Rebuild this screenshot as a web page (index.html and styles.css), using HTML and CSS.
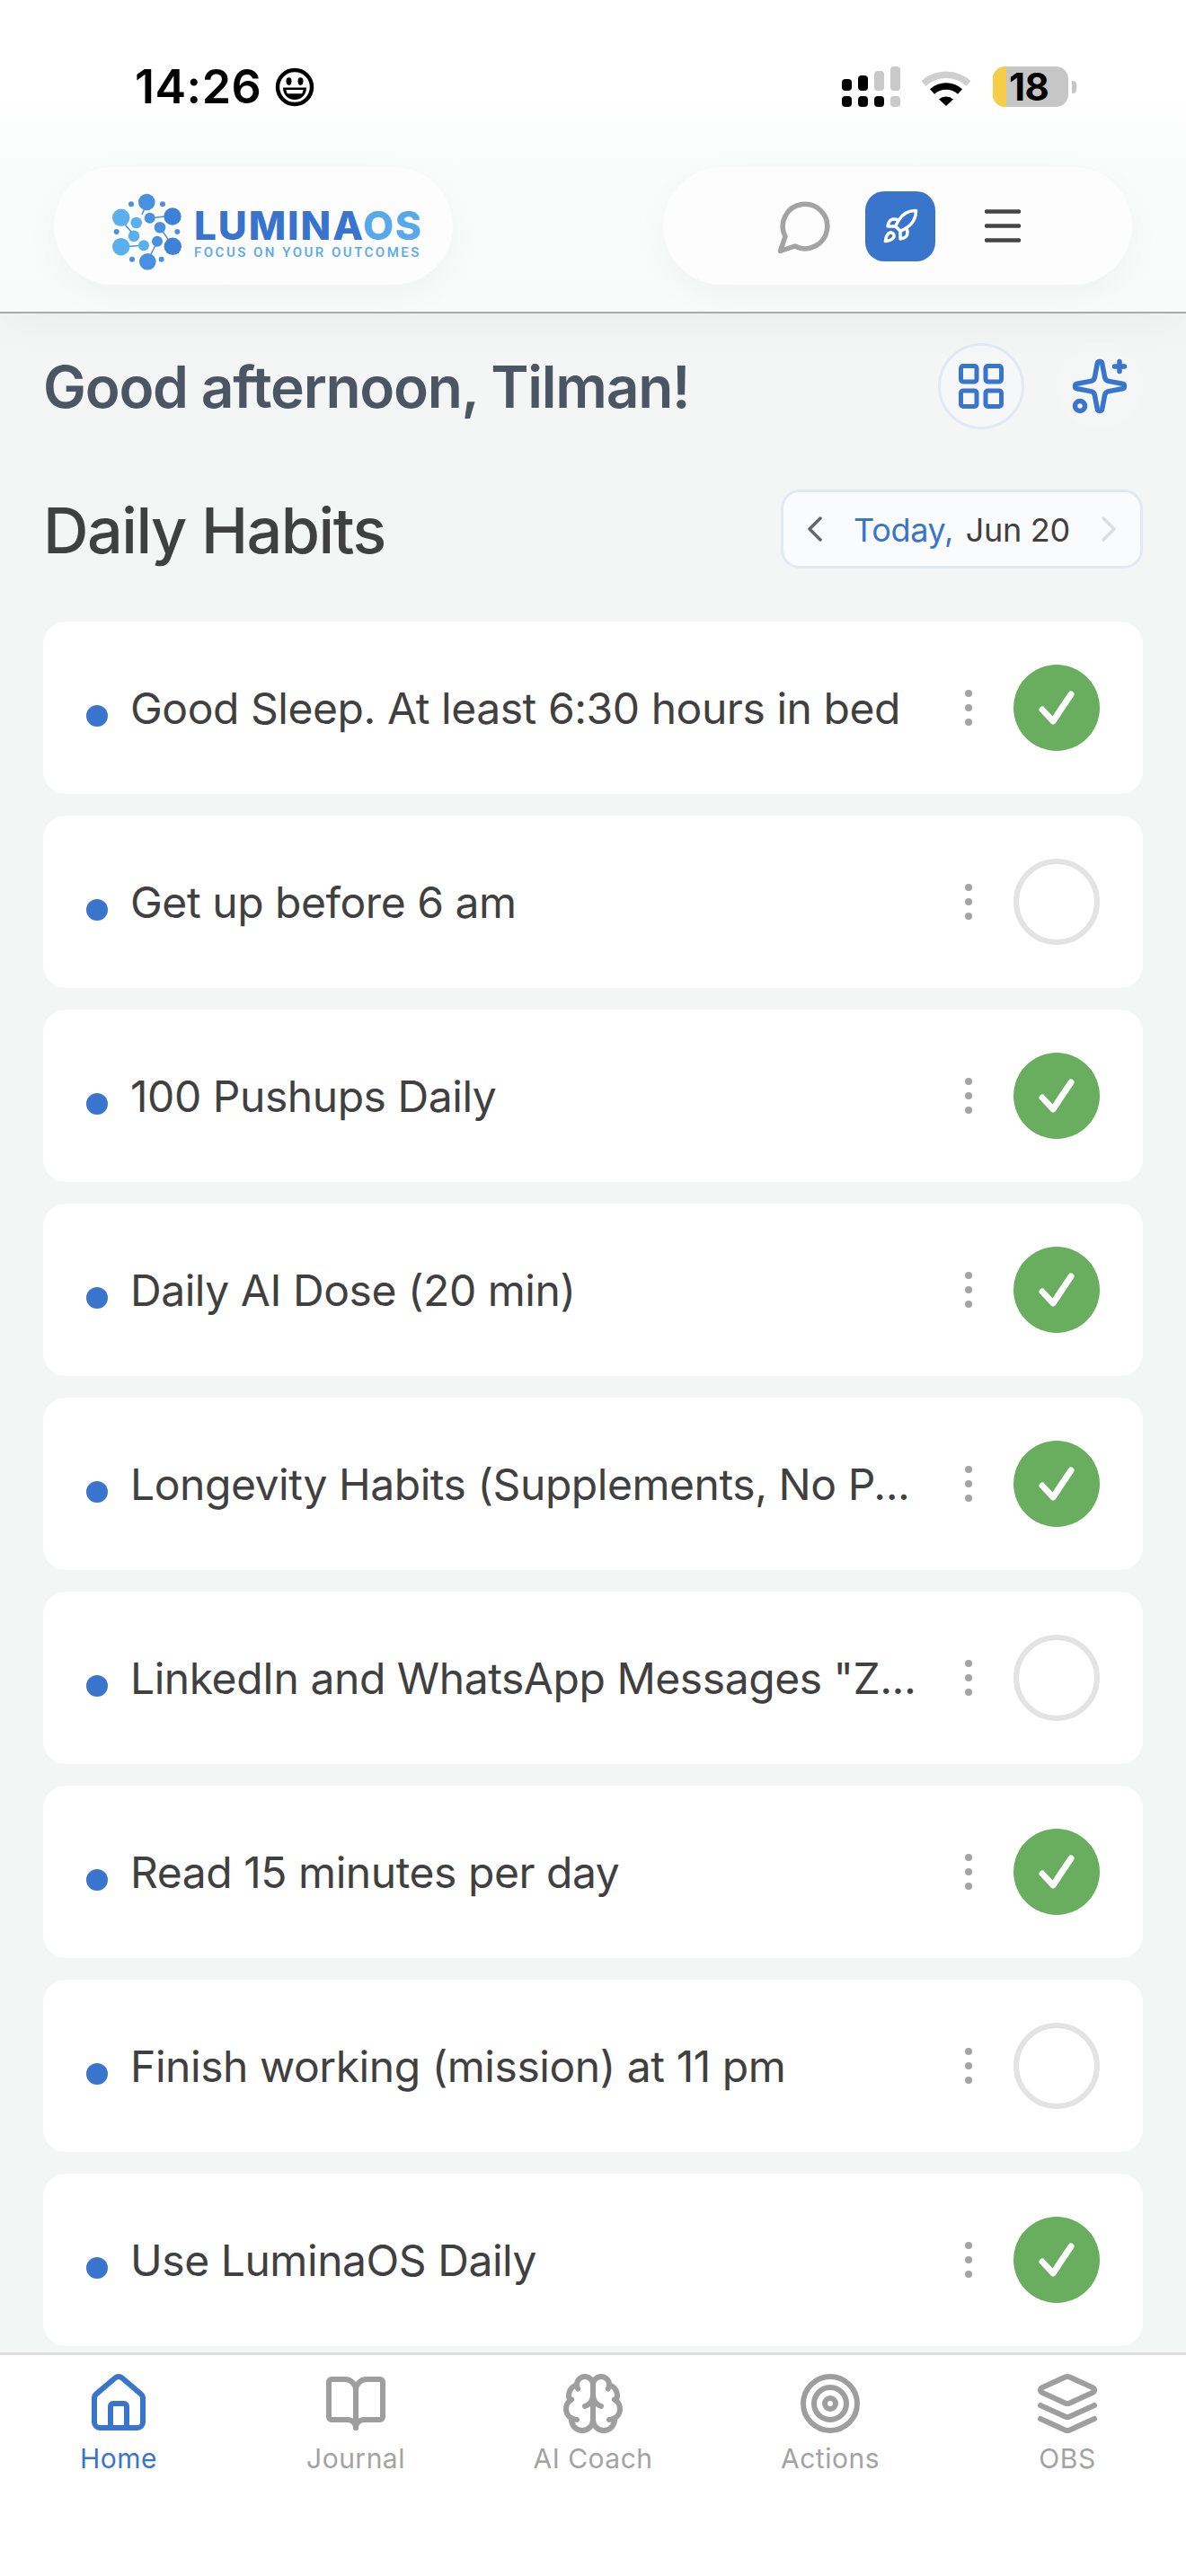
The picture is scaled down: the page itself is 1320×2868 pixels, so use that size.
FILE: index.html
```html
<!DOCTYPE html>
<html lang="en">
<head>
<meta charset="utf-8">
<title>LuminaOS</title>
<link rel="stylesheet" href="styles.css">
</head>
<body>
<div class="app">
  <header class="top">
    <div class="status">
      <div class="clock">
        <span class="time">14:26</span>
        <svg class="emoji" viewBox="0 0 44 44"><circle cx="22" cy="22" r="19" fill="#fff" stroke="#000" stroke-width="4.4"/><ellipse cx="15.5" cy="15.5" rx="3" ry="4.2"/><ellipse cx="28.5" cy="15.5" rx="3" ry="4.2"/><path d="M9 22.5h26c0 8-5.5 13.5-13 13.5S9 30.500 9 22.500z"/><path d="M12.500 25h19c-.3 2-.8 3.200-1.500 4.200H14c-.7-1-1.200-2.200-1.500-4.200z" fill="#fff"/></svg>
      </div>
      <div class="indicators">
        <svg class="signal" viewBox="0 0 65 45"><g><rect x="0" y="14" width="11" height="13" rx="4"/><rect x="18" y="10" width="11" height="17" rx="4"/><rect x="0" y="33" width="11" height="12" rx="4"/><rect x="18" y="33" width="11" height="12" rx="4"/><rect x="36" y="33" width="11" height="12" rx="4"/></g><g fill="#c9c9c9"><rect x="36" y="5" width="11" height="22" rx="4"/><rect x="54" y="0" width="11" height="27" rx="4"/><rect x="54" y="33" width="11" height="12" rx="4"/></g></svg>
        <svg class="wifi" viewBox="0 0 58 43"><path d="M4 18a37 37 0 0 1 50 0" fill="none" stroke="#cfcfcf" stroke-width="7.500"/><path d="M13.500 27a23 23 0 0 1 31 0" fill="none" stroke="#000" stroke-width="7.500"/><path d="M21 35.500a12 12 0 0 1 16 0L29 43z"/></svg>
        <div class="battery">
          <div class="battery-body"><span class="battery-fill"></span><span class="battery-num">18</span></div>
          <span class="battery-tip"></span>
        </div>
      </div>
    </div>
    <div class="bar">
      <div class="pill logo-pill">
        <svg class="logo-mark" viewBox="0 0 80 90">
          <g stroke="#4a90e2" stroke-width="1.500" fill="none"><path d="M41 13l-5 12M44 29l26-3M12 30l17 20M12 61l28-2M56 39l14 21M53 55L42 77"/></g>
          <g fill="#4a90e2"><circle cx="41.300" cy="11" r="9.300"/><circle cx="24" cy="13.300" r="3"/><circle cx="59" cy="13.300" r="3"/><circle cx="44.700" cy="28.700" r="6"/><circle cx="56" cy="39.300" r="6.300"/><circle cx="7.700" cy="44" r="3"/><circle cx="75.300" cy="44" r="3"/><circle cx="53" cy="54.700" r="6"/><circle cx="25" cy="74.700" r="3"/><circle cx="42.300" cy="77.300" r="9.300"/><circle cx="57.700" cy="74.700" r="3"/></g>
          <g fill="#5aafef"><circle cx="12.700" cy="28.300" r="9.700"/><circle cx="29.700" cy="34" r="6.300"/><circle cx="27" cy="48.700" r="6.300"/><circle cx="12.700" cy="60.700" r="9.700"/><circle cx="38" cy="59.300" r="6"/></g>
          <g fill="#3f80d8"><circle cx="70" cy="27" r="9.700"/><circle cx="70.300" cy="60.300" r="9.700"/></g>
        </svg>
        <div class="logo-text">
          <div class="logo-name">LUMINA<span class="logo-os">OS</span></div>
          <div class="logo-tag">FOCUS ON YOUR OUTCOMES</div>
        </div>
      </div>
      <div class="pill tools-pill">
        <svg class="icon-chat" viewBox="0 0 24 24"><path d="M7.900 20A9 9 0 1 0 4 16.100L2 22Z"/></svg>
        <div class="rocket-tile">
          <svg class="icon-rocket" viewBox="0 0 24 24"><path d="M4.500 16.500c-1.500 1.260-2 5-2 5s3.740-.5 5-2c.71-.84.7-2.130-.09-2.910a2.180 2.180 0 0 0-2.910-.09z"/><path d="m12 15-3-3a22 22 0 0 1 2-3.950A12.880 12.880 0 0 1 22 2c0 2.720-.78 7.500-6 11a22.350 22.350 0 0 1-4 2z"/><path d="M9 12H4s.55-3.030 2-4c1.620-1.080 5 0 5 0"/><path d="M12 15v5s3.030-.55 4-2c1.080-1.620 0-5 0-5"/></svg>
        </div>
        <svg class="icon-menu" viewBox="0 0 40 37"><path d="M2 2.500h36M2 18.500h36M2 34.500h36"/></svg>
      </div>
    </div>
  </header>

  <main class="main">
    <div class="greeting-row">
      <h1 class="greeting">Good afternoon, Tilman!</h1>
      <div class="round-buttons">
        <div class="round-btn round-btn-outlined">
          <svg class="icon-grid" viewBox="0 0 24 24"><rect width="7" height="7" x="3" y="3" rx="1"/><rect width="7" height="7" x="14" y="3" rx="1"/><rect width="7" height="7" x="14" y="14" rx="1"/><rect width="7" height="7" x="3" y="14" rx="1"/></svg>
        </div>
        <div class="round-btn">
          <svg class="icon-sparkle" viewBox="0 0 24 24"><path d="M11.017 2.814a1 1 0 0 1 1.966 0l1.051 5.558a2 2 0 0 0 1.594 1.594l5.558 1.051a1 1 0 0 1 0 1.966l-5.558 1.051a2 2 0 0 0-1.594 1.594l-1.051 5.558a1 1 0 0 1-1.966 0l-1.051-5.558a2 2 0 0 0-1.594-1.594l-5.558-1.051a1 1 0 0 1 0-1.966l5.558-1.051a2 2 0 0 0 1.594-1.594z"/><path d="M20 2v4"/><path d="M22 4h-4"/><circle cx="4" cy="20" r="2"/></svg>
        </div>
      </div>
    </div>

    <div class="habits-head">
      <h2 class="habits-title">Daily Habits</h2>
      <div class="date-picker">
        <svg class="chev chev-on" viewBox="0 0 16 28"><path d="M14 2L2 14l12 12"/></svg>
        <span class="date-text"><span class="date-today">Today,</span> Jun 20</span>
        <svg class="chev chev-off" viewBox="0 0 16 28"><path d="M2 2l12 12L2 26"/></svg>
      </div>
    </div>

    <ul class="habits">
      <li class="habit"><span class="bullet"></span><span class="habit-name">Good Sleep. At least 6:30 hours in bed</span><span class="more"><i></i><i></i><i></i></span><span class="check done"><svg viewBox="0 0 96 96"><path d="M32 50l12 13 20-30"/></svg></span></li>
      <li class="habit"><span class="bullet"></span><span class="habit-name">Get up before 6 am</span><span class="more"><i></i><i></i><i></i></span><span class="check"></span></li>
      <li class="habit"><span class="bullet"></span><span class="habit-name">100 Pushups Daily</span><span class="more"><i></i><i></i><i></i></span><span class="check done"><svg viewBox="0 0 96 96"><path d="M32 50l12 13 20-30"/></svg></span></li>
      <li class="habit"><span class="bullet"></span><span class="habit-name">Daily AI Dose (20 min)</span><span class="more"><i></i><i></i><i></i></span><span class="check done"><svg viewBox="0 0 96 96"><path d="M32 50l12 13 20-30"/></svg></span></li>
      <li class="habit"><span class="bullet"></span><span class="habit-name">Longevity Habits (Supplements, No P...</span><span class="more"><i></i><i></i><i></i></span><span class="check done"><svg viewBox="0 0 96 96"><path d="M32 50l12 13 20-30"/></svg></span></li>
      <li class="habit"><span class="bullet"></span><span class="habit-name">LinkedIn and WhatsApp Messages "Z...</span><span class="more"><i></i><i></i><i></i></span><span class="check"></span></li>
      <li class="habit"><span class="bullet"></span><span class="habit-name">Read 15 minutes per day</span><span class="more"><i></i><i></i><i></i></span><span class="check done"><svg viewBox="0 0 96 96"><path d="M32 50l12 13 20-30"/></svg></span></li>
      <li class="habit"><span class="bullet"></span><span class="habit-name">Finish working (mission) at 11 pm</span><span class="more"><i></i><i></i><i></i></span><span class="check"></span></li>
      <li class="habit"><span class="bullet"></span><span class="habit-name">Use LuminaOS Daily</span><span class="more"><i></i><i></i><i></i></span><span class="check done"><svg viewBox="0 0 96 96"><path d="M32 50l12 13 20-30"/></svg></span></li>
    </ul>
  </main>

  <nav class="tabs">
    <div class="tab tab-active">
      <svg viewBox="0 0 24 24"><path d="M15 21v-8a1 1 0 0 0-1-1h-4a1 1 0 0 0-1 1v8"/><path d="M3 10a2 2 0 0 1 .709-1.528l7-5.999a2 2 0 0 1 2.582 0l7 5.999A2 2 0 0 1 21 10v9a2 2 0 0 1-2 2H5a2 2 0 0 1-2-2z"/></svg>
      <span>Home</span>
    </div>
    <div class="tab">
      <svg viewBox="0 0 24 24"><path d="M12 7v14"/><path d="M3 18a1 1 0 0 1-1-1V4a1 1 0 0 1 1-1h5a4 4 0 0 1 4 4 4 4 0 0 1 4-4h5a1 1 0 0 1 1 1v13a1 1 0 0 1-1 1h-6a3 3 0 0 0-3 3 3 3 0 0 0-3-3z"/></svg>
      <span>Journal</span>
    </div>
    <div class="tab">
      <svg viewBox="0 0 24 24"><path d="M12 5a3 3 0 1 0-5.997.125 4 4 0 0 0-2.526 5.770 4 4 0 0 0 .556 6.588A4 4 0 1 0 12 18Z"/><path d="M12 5a3 3 0 1 1 5.997.125 4 4 0 0 1 2.526 5.770 4 4 0 0 1-.556 6.588A4 4 0 1 1 12 18Z"/><path d="M15 13a4.500 4.500 0 0 1-3-4 4.500 4.500 0 0 1-3 4"/><path d="M17.599 6.500a3 3 0 0 0 .399-1.375"/><path d="M6.003 5.125A3 3 0 0 0 6.401 6.500"/><path d="M3.477 10.896a4 4 0 0 1 .585-.396"/><path d="M19.938 10.500a4 4 0 0 1 .585.396"/><path d="M6 18a4 4 0 0 1-1.967-.516"/><path d="M19.967 17.484A4 4 0 0 1 18 18"/></svg>
      <span>AI Coach</span>
    </div>
    <div class="tab">
      <svg viewBox="0 0 24 24"><circle cx="12" cy="12" r="10"/><circle cx="12" cy="12" r="6"/><circle cx="12" cy="12" r="2"/></svg>
      <span>Actions</span>
    </div>
    <div class="tab">
      <svg viewBox="0 0 24 24"><path d="m12.830 2.180a2 2 0 0 0-1.660 0L2.600 6.080a1 1 0 0 0 0 1.830l8.580 3.910a2 2 0 0 0 1.660 0l8.580-3.900a1 1 0 0 0 0-1.830Z"/><path d="m22 17.650-9.170 4.160a2 2 0 0 1-1.660 0L2 17.650"/><path d="m22 12.650-9.170 4.160a2 2 0 0 1-1.660 0L2 12.650"/></svg>
      <span>OBS</span>
    </div>
  </nav>
</div>
</body>
</html>
```

FILE: styles.css
```css
* { box-sizing: border-box; }
html, body { margin: 0; padding: 0; }
body { font-family: Inter, "Liberation Sans", sans-serif; background: #fff; }
h1, h2, ul { margin: 0; padding: 0; }
ul { list-style: none; }

.app {
  width: 1320px;
  height: 2868px;
  display: flex;
  flex-direction: column;
  overflow: hidden;
  background: #f4f6f6;
}

/* top */
.top {
  height: 349px;
  flex: none;
  background: linear-gradient(#fff 0, #fff 100px, #fafbfb 190px, #f9fafa 100%);
  border-bottom: 2px solid #ababab;
  box-shadow: 0 10px 50px rgba(0, 0, 0, .04);
  position: relative;
  z-index: 1;
}
.status {
  height: 186px;
  padding: 74px 122px 0 150px;
  display: flex;
  justify-content: space-between;
  align-items: flex-start;
}
.clock { display: flex; align-items: center; gap: 15px; height: 45px; }
.time { font-size: 52px; font-weight: 600; line-height: 45px; color: #000; letter-spacing: .5px; }
.emoji { width: 44px; height: 44px; display: block; }
.indicators { display: flex; align-items: flex-start; }
.signal { width: 65px; height: 45px; display: block; margin-right: 22px; }
.wifi { width: 58px; height: 43px; display: block; margin: 1px 23px 0 0; }
.battery { display: flex; align-items: center; gap: 4px; height: 45px; }
.battery-body {
  width: 84px;
  height: 45px;
  border-radius: 14px;
  background: #c6c6c6;
  display: flex;
  align-items: center;
}
.battery-fill { width: 15px; height: 100%; background: #f6cd46; flex: none; border-radius: 14px 0 0 14px; }
.battery-num { font-size: 42px; font-weight: 700; line-height: 45px; color: #000; margin-left: 3px; letter-spacing: -.5px; }
.battery-tip { width: 5px; height: 14px; background: #c6c6c6; border-radius: 0 4px 4px 0; }

.bar { display: flex; justify-content: space-between; padding: 0 60px; }
.pill {
  height: 131px;
  border-radius: 66px;
  background: #fdfdfd;
  box-shadow: 0 12px 40px rgba(0, 0, 0, .035);
  display: flex;
  align-items: center;
}
.logo-pill { width: 444px; padding-left: 62px; }
.logo-mark { width: 80px; height: 90px; flex: none; display: block; margin-top: 15px; }
.logo-text { margin: 17px 0 0 14px; width: 252px; }
.logo-name {
  font-size: 44px;
  font-weight: 800;
  line-height: 38px;
  letter-spacing: 1.9px;
  color: #3873cc;
  white-space: nowrap;
  height: 38px;
}
.logo-os { color: #58a9ea; }
.logo-tag {
  font-family: Roboto, Inter, sans-serif;
  font-size: 15px;
  font-weight: 500;
  line-height: 16px;
  margin-top: 3px;
  letter-spacing: 2.5px;
  color: #58a9ea;
  white-space: nowrap;
}
.tools-pill { width: 522px; padding-left: 125px; }
.icon-chat { width: 66px; height: 66px; fill: none; stroke: #a3a3a3; stroke-width: 2; stroke-linecap: round; stroke-linejoin: round; display: block; }
.rocket-tile {
  width: 78px;
  height: 78px;
  margin-left: 34px;
  border-radius: 21px;
  background: #3a75cc;
  display: flex;
  align-items: center;
  justify-content: center;
}
.icon-rocket { width: 42px; height: 42px; fill: none; stroke: #fff; stroke-width: 2; stroke-linecap: round; stroke-linejoin: round; display: block; }
.icon-menu { width: 40px; height: 37px; margin-left: 55px; fill: none; stroke: #444; stroke-width: 4.500; stroke-linecap: round; display: block; }

/* main */
.main { flex: 1; min-height: 0; padding: 33px 48px 0; overflow: hidden; }
.greeting-row { display: flex; justify-content: space-between; align-items: center; height: 96px; }
.greeting { font-size: 64px; font-weight: 600; color: #4b5563; line-height: 96px; padding-top: 2px; letter-spacing: -1.260px; white-space: nowrap; }
.round-buttons { display: flex; gap: 36px; }
.round-btn {
  width: 96px;
  height: 96px;
  border-radius: 50%;
  display: flex;
  align-items: center;
  justify-content: center;
  background: #f5f7f7;
}
.round-btn-outlined { border: 3px solid #e2e9f3; background: #f6f7f8; }
.icon-grid { width: 60px; height: 60px; fill: none; stroke: #3a75cc; stroke-width: 2; stroke-linecap: round; stroke-linejoin: round; display: block; }
.icon-sparkle { width: 66px; height: 66px; fill: none; stroke: #3a75cc; stroke-width: 2; stroke-linecap: round; stroke-linejoin: round; display: block; }

.habits-head { display: flex; justify-content: space-between; align-items: center; height: 88px; margin-top: 67px; }
.habits-title { font-size: 70px; font-weight: 500; color: #404040; line-height: 88px; padding-top: 4px; letter-spacing: -1.500px; white-space: nowrap; }
.date-picker {
  width: 403px;
  height: 88px;
  border: 3px solid #e2e9f3;
  border-radius: 21px;
  background: #fafbfc;
  display: flex;
  align-items: center;
  padding: 0 27px;
  justify-content: space-between;
}
.chev { width: 16px; height: 28px; fill: none; stroke-width: 3.500; stroke-linecap: round; stroke-linejoin: round; display: block; }
.chev-on { stroke: #666; }
.chev-off { stroke: #ddd; }
.date-text { font-size: 36px; color: #404040; white-space: nowrap; letter-spacing: -.3px; padding-top: 2px; }
.date-today { color: #3a75cc; margin-right: 4px; }

.habits { margin-top: 59px; display: flex; flex-direction: column; gap: 24px; }
.habit {
  height: 192px;
  flex: none;
  background: #fff;
  border-radius: 25px;
  padding: 0 48px;
  display: flex;
  align-items: center;
}
.bullet { width: 24px; height: 24px; border-radius: 50%; background: #3a75cc; flex: none; margin: 18px 25px 0 0; }
.habit-name { flex: 1; min-width: 0; font-size: 48px; color: #404040; white-space: nowrap; letter-spacing: -.45px; }
.more { display: flex; flex-direction: column; gap: 8px; width: 8px; flex: none; margin-right: 46px; }
.more i { display: block; width: 8px; height: 8px; border-radius: 50%; background: #a3a3a3; }
.check { width: 96px; height: 96px; border-radius: 50%; border: 6px solid #e3e3e3; flex: none; display: block; }
.check.done { border: 0; background: #69ae5f; }
.check svg { display: block; width: 96px; height: 96px; fill: none; stroke: #fff; stroke-width: 7; stroke-linecap: round; stroke-linejoin: round; }

/* tabs */
.tabs {
  flex: none;
  height: 249px;
  background: #fff;
  border-top: 3px solid #dedede;
  display: grid;
  grid-template-columns: repeat(5, 1fr);
  padding-top: 18px;
  position: relative;
}
.tab { display: flex; flex-direction: column; align-items: center; color: #a3a3a3; font-size: 30px; line-height: 36px; }
.tab svg { width: 72px; height: 72px; fill: none; stroke: #9e9e9e; stroke-width: 2; stroke-linecap: round; stroke-linejoin: round; display: block; }
.tab span { margin-top: 7px; white-space: nowrap; letter-spacing: .5px; }
.tab-active { color: #3a75cc; }
.tab-active svg { stroke: #3a75cc; }
```
